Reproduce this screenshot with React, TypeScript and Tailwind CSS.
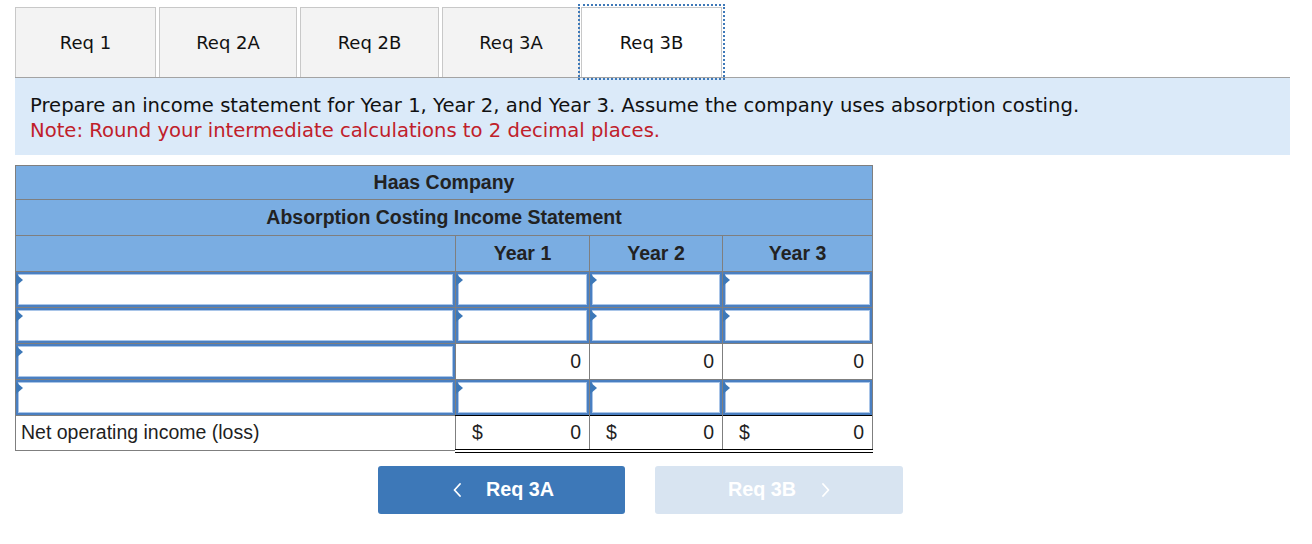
import React from 'react';

const tabs = [
  { label: 'Req 1', w: 'w-[141px]' },
  { label: 'Req 2A', w: 'w-[138px]' },
  { label: 'Req 2B', w: 'w-[139px]' },
  { label: 'Req 3A', w: 'w-[138px]' },
];

function InputCell({ className = '' }: { className?: string }) {
  return (
    <td className={`p-0 border border-[#7f7f7f] ${className}`}>
      <div className="relative h-[35px] border-2 border-[#4a7fc1] shadow-[inset_0_0_0_1px_#a9c5e8] bg-white">
        <span className="absolute left-[-2px] top-[0px] w-0 h-0 border-l-[7px] border-l-[#3d78b8] border-y-[6px] border-y-transparent" />
      </div>
    </td>
  );
}

function Chevron({ dir, className = '' }: { dir: 'left' | 'right'; className?: string }) {
  return (
    <svg width="8" height="14" viewBox="0 0 8 14" className={className} fill="none">
      <path
        d={dir === 'left' ? 'M7 1 L1.5 7 L7 13' : 'M1 1 L6.5 7 L1 13'}
        stroke="currentColor"
        strokeWidth="1.8"
        strokeLinecap="round"
        strokeLinejoin="round"
      />
    </svg>
  );
}

export default function App() {
  return (
    <div className="w-[1312px] h-[544px] bg-white pl-[15px]" style={{ fontFamily: '"DejaVu Sans", Verdana, sans-serif' }}>
      {/* tabs */}
      <div className="w-[1275px] pt-[7px] flex items-end gap-[3px] border-b border-[#a3a3a3]">
        {tabs.map(t => (
          <div
            key={t.label}
            className={`${t.w} h-[70px] bg-[#f3f3f3] border border-b-0 border-[#c8c8c8] flex items-center justify-center text-[18px] text-[#111]`}
          >
            {t.label}
          </div>
        ))}
        <div className="w-[141px] h-[70px] -ml-[2px] bg-white border border-b-0 border-[#c8c8c8] outline-2 outline-dotted outline-[#3d78b8] outline-offset-[1px] flex items-center justify-center text-[18px] text-[#111]">
          Req 3B
        </div>
      </div>

      {/* instructions */}
      <div className="w-[1275px] h-[77px] bg-[#dbeaf9] px-[15px] pt-[15px] text-[19.6px] leading-[25px] text-[#111]">
        <p>Prepare an income statement for Year 1, Year 2, and Year 3. Assume the company uses absorption costing.</p>
        <p className="text-[#c0202a]">Note: Round your intermediate calculations to 2 decimal places.</p>
      </div>

      {/* statement */}
      <table
        className="mt-[10px] border-collapse table-fixed w-[857px] text-[19.5px] text-[#1f1f1f]"
        style={{ fontFamily: '"Liberation Sans", Arial, sans-serif' }}
      >
        <colgroup>
          <col className="w-[440px]" />
          <col className="w-[134px]" />
          <col className="w-[133px]" />
          <col className="w-[150px]" />
        </colgroup>
        <thead className="bg-[#7aade2] font-bold text-[#222]">
          <tr className="h-[34px]">
            <th colSpan={4} className="border border-[#7f7f7f] text-center">Haas Company</th>
          </tr>
          <tr className="h-[36px]">
            <th colSpan={4} className="border border-[#7f7f7f] text-center">Absorption Costing Income Statement</th>
          </tr>
          <tr className="h-[36px]">
            <th className="border border-[#7f7f7f]" />
            <th className="border border-[#7f7f7f] text-center">Year 1</th>
            <th className="border border-[#7f7f7f] text-center">Year 2</th>
            <th className="border border-[#7f7f7f] text-center">Year 3</th>
          </tr>
        </thead>
        <tbody>
          <tr>
            <InputCell />
            <InputCell />
            <InputCell />
            <InputCell />
          </tr>
          <tr>
            <InputCell />
            <InputCell />
            <InputCell />
            <InputCell />
          </tr>
          <tr className="h-[36px]">
            <InputCell />
            {[0, 1, 2].map(i => (
              <td key={i} className="border border-[#7f7f7f] border-t-black text-right pr-[8px]">0</td>
            ))}
          </tr>
          <tr>
            <InputCell />
            <InputCell />
            <InputCell />
            <InputCell />
          </tr>
          <tr className="h-[35px]">
            <td className="border border-[#7f7f7f] pl-[5px]">Net operating income (loss)</td>
            {[0, 1, 2].map(i => (
              <td
                key={i}
                className="border border-[#7f7f7f] border-t-black border-b-[4px] border-b-black border-double pr-[8px]"
              >
                <div className="flex justify-between pl-[16px]">
                  <span>$</span>
                  <span>0</span>
                </div>
              </td>
            ))}
          </tr>
        </tbody>
      </table>

      {/* navigation */}
      <div className="flex gap-[30px] ml-[363px] mt-[13px]" style={{ fontFamily: '"Liberation Sans", Arial, sans-serif' }}>
        <button className="w-[247px] h-[48px] rounded-[3px] bg-[#3d78b8] text-white font-bold text-[19.8px] flex items-center justify-center pl-[4px]">
          <Chevron dir="left" className="mr-[25px]" />
          Req 3A
        </button>
        <button className="w-[248px] h-[48px] rounded-[3px] bg-[#d8e4f1] text-white font-bold text-[19.8px] flex items-center justify-center">
          Req 3B
          <Chevron dir="right" className="ml-[26px]" />
        </button>
      </div>
    </div>
  );
}
